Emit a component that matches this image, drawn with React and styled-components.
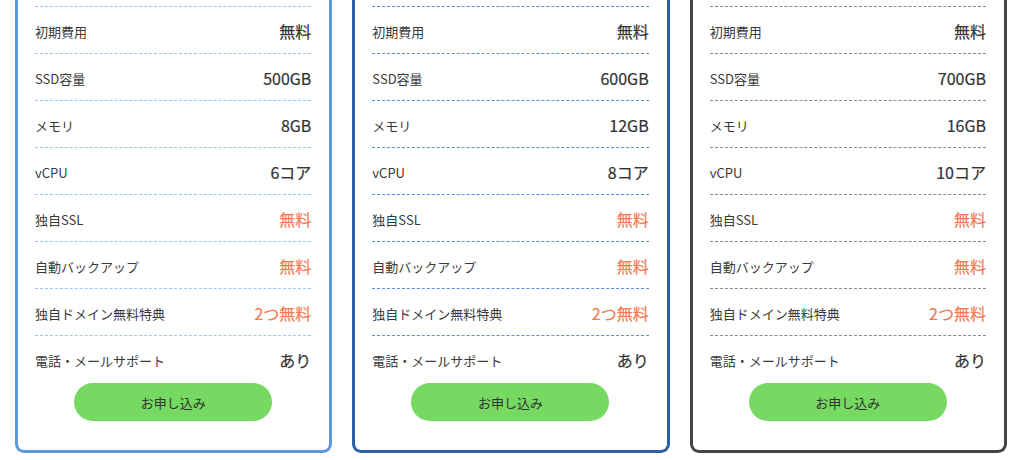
import React from 'react';
import styled, { createGlobalStyle } from 'styled-components';

const GlobalStyle = createGlobalStyle`
    body {
        margin: 0;
        background: #fff;
        font-family: "Noto Sans CJK JP", "Noto Sans", sans-serif;
        color: #333;
    }
`;

const Plans = styled.div`
    display: flex;
    gap: 20px;
    padding: 0 17px 0 15px;
`;

const Card = styled.div`
    flex: 1;
    border: 3px solid ${p => p.$border};
    border-top: none;
    border-radius: 0 0 9px 9px;
    padding: 6px 18px 29px 17px;
    display: flex;
    flex-direction: column;
`;

const Row = styled.div`
    display: flex;
    align-items: center;
    justify-content: space-between;
    padding-top: 2px;
    box-sizing: border-box;
    border-top: 1px dashed ${p => p.$line};
    height: 47px;
`;

const Label = styled.span`
    font-size: 13px;
    color: #3a3a3a;
`;

const Value = styled.span`
    font-size: 16px;
    font-weight: 400;
    color: ${p => (p.$accent ? '#f47a52' : '#333')};
    -webkit-text-stroke: 0.2px currentColor;
`;

const ApplyButton = styled.button`
    align-self: center;
    margin-top: 1px;
    width: 198px;
    height: 38px;
    border: none;
    border-radius: 19px;
    background: #75d962;
    color: #333;
    font-family: inherit;
    font-size: 13px;
    cursor: pointer;
`;

const plans = [
    { border: '#5b9ade', line: '#9cc6f0', ssd: '500GB', mem: '8GB', cpu: '6コア' },
    { border: '#2d5ea8', line: '#5a8fd8', ssd: '600GB', mem: '12GB', cpu: '8コア' },
    { border: '#444', line: '#8a8a8a', ssd: '700GB', mem: '16GB', cpu: '10コア' },
];

function App() {
    return (
        <>
            <GlobalStyle />
            <Plans>
                {plans.map((plan, idx) => {
                    const rows = [
                        ['初期費用', '無料', false],
                        ['SSD容量', plan.ssd, false],
                        ['メモリ', plan.mem, false],
                        ['vCPU', plan.cpu, false],
                        ['独自SSL', '無料', true],
                        ['自動バックアップ', '無料', true],
                        ['独自ドメイン無料特典', '2つ無料', true],
                        ['電話・メールサポート', 'あり', false],
                    ];
                    return (
                        <Card key={idx} $border={plan.border}>
                            {rows.map(([label, value, accent]) => (
                                <Row key={label} $line={plan.line}>
                                    <Label>{label}</Label>
                                    <Value $accent={accent}>{value}</Value>
                                </Row>
                            ))}
                            <ApplyButton>お申し込み</ApplyButton>
                        </Card>
                    );
                })}
            </Plans>
        </>
    );
}

export default App;
